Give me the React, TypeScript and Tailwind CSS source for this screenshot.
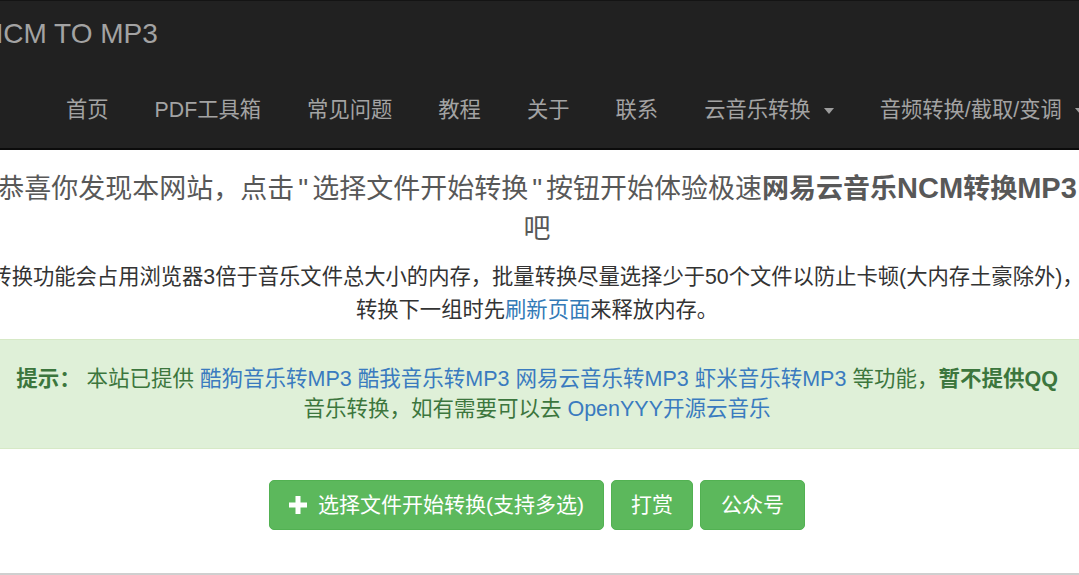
import React from 'react';

const NAV = ['首页', 'PDF工具箱', '常见问题', '教程', '关于', '联系'];

function Caret() {
  return (
    <span className="ml-[13px] inline-block h-0 w-0 border-x-[5px] border-t-[6px] border-x-transparent border-t-[#9d9d9d] align-middle" />
  );
}

function PlusIcon() {
  return (
    <svg width="18" height="18" viewBox="0 0 18 18" className="shrink-0" aria-hidden>
      <rect x="6.5" y="0" width="5" height="18" fill="#fff" />
      <rect x="0" y="6.5" width="18" height="5" fill="#fff" />
    </svg>
  );
}

export default function App() {
  return (
    <div className="flex h-[575px] w-[1079px] flex-col overflow-hidden bg-white font-['Liberation_Sans','Noto_Sans_CJK_SC',sans-serif]">
      {/* inverse navbar */}
      <header className="h-[150px] shrink-0 border-t border-b-2 border-t-[#141414] border-b-[#0b0b0b] bg-[#212121]">
        <div className="flex h-[66px] items-center">
          <span className="-ml-[17px] text-[28px] leading-none text-[#a3a3a3]">NCM TO MP3</span>
        </div>
        <ul className="ml-[43px] flex h-[80px] items-center whitespace-nowrap pt-[7px] text-[21.3px] text-[#a3a3a3]">
          {NAV.map((n) => (
            <li key={n} className="px-[23px]">{n}</li>
          ))}
          <li className="flex items-center px-[23px]">
            云音乐转换
            <Caret />
          </li>
          <li className="flex items-center px-[23px]">
            音频转换/截取/变调
            <Caret />
          </li>
        </ul>
      </header>

      {/* content column, wider than the window and clipped on both sides */}
      <main className="-ml-[13px] w-[1100px] shrink-0 text-center">
        <h3 className="mt-[18px] whitespace-nowrap text-[27px] leading-[40px] text-[#585858]">
          恭喜你发现本网站，点击<span className="px-[4px] text-[28px]">"</span>选择文件开始转换<span className="px-[4px] text-[28px]">"</span>按钮开始体验极速
          <b className="font-bold">
            网易云音乐<span className="text-[29px]">NCM</span>转换<span className="text-[29px]">MP3</span>
          </b>
          <br />吧
        </h3>

        <p className="mt-[12px] text-[21.3px] leading-[33px] text-[#333]">
          转换功能会占用浏览器3倍于音乐文件总大小的内存，批量转换尽量选择少于50个文件以防止卡顿(大内存土豪除外)，
          <br />
          转换下一组时先<a className="text-[#337ab7]">刷新页面</a>来释放内存。
        </p>

        <div className="mt-[12px] border-y border-[#d6e9c6] bg-[#dff0d8] px-[20px] py-[24px] text-[21.5px] leading-[30px] text-[#3c763d]">
          <b>提示：</b> 本站已提供 <a className="text-[#3a7bbf]">酷狗音乐转MP3</a> <a className="text-[#3a7bbf]">酷我音乐转MP3</a>{' '}
          <a className="text-[#3a7bbf]">网易云音乐转MP3</a> <a className="text-[#3a7bbf]">虾米音乐转MP3</a> 等功能，
          <b>暂不提供QQ</b>
          <br />
          音乐转换，如有需要可以去 <a className="text-[#3a7bbf]">OpenYYY开源云音乐</a>
        </div>

        <div className="mt-[31px] flex justify-center gap-[7px] text-[21px] text-white">
          <button className="flex h-[50px] items-center gap-[11px] rounded-[5px] border border-[#52b152] bg-[#5cb85c] px-[19px]">
            <PlusIcon />
            选择文件开始转换(支持多选)
          </button>
          <button className="h-[50px] rounded-[5px] border border-[#52b152] bg-[#5cb85c] px-[19px]">打赏</button>
          <button className="h-[50px] rounded-[5px] border border-[#52b152] bg-[#5cb85c] px-[20px]">公众号</button>
        </div>
      </main>

      <div className="flex-1" />
      <div className="h-[2px] shrink-0 bg-[#cfcfcf]" />
    </div>
  );
}
